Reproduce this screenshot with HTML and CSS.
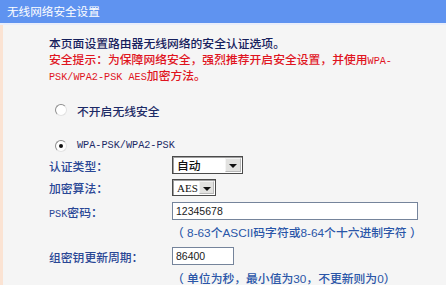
FILE: index.html
```html
<!DOCTYPE html>
<html lang="zh-CN">
<head>
    <meta charset="UTF-8">
    <title>无线网络安全设置</title>
    <link rel="stylesheet" href="styles.css">
</head>
<body>
    <div class="titlebar">无线网络安全设置</div>
    <div class="panel">
        <div class="intro">
            <p class="note">本页面设置路由器无线网络的安全认证选项。</p>
            <p class="warn">安全提示：为保障网络安全，强烈推荐开启安全设置，并使用<span class="mono">WPA-</span><br><span class="mono">PSK/WPA2-PSK AES</span>加密方法。</p>
        </div>

        <div class="option first">
            <span class="radio"></span>
            <span>不开启无线安全</span>
        </div>
        <div class="option second">
            <span class="radio checked"></span>
            <span class="mono">WPA-PSK/WPA2-PSK</span>
        </div>

        <div class="form">
            <div class="row row-auth">
                <span class="label">认证类型：</span>
                <div class="select wide"><span class="value">自动</span><span class="arrow"></span></div>
            </div>
            <div class="row row-cipher">
                <span class="label">加密算法：</span>
                <div class="select narrow"><span class="value serif-val">AES</span><span class="arrow"></span></div>
            </div>
            <div class="row row-psk">
                <span class="label"><span class="mono">PSK</span>密码：</span>
                <div class="field long">12345678</div>
            </div>
            <div class="hint hint-psk">（ 8-63个ASCII码字符或8-64个十六进制字符 ）</div>
            <div class="row row-period">
                <span class="label">组密钥更新周期：</span>
                <div class="field short">86400</div>
            </div>
            <div class="hint hint-period">（ 单位为秒，最小值为30，不更新则为0）</div>
        </div>
    </div>
</body>
</html>
```

FILE: styles.css
```css
body {
    margin: 0;
    background: #f5f5f5;
    font-family: "Noto Sans CJK SC", "Liberation Sans", sans-serif;
    font-size: 11.8px;
    font-weight: 500;
    overflow: hidden;
}

.titlebar {
    height: 23px;
    line-height: 23px;
    padding-left: 7px;
    background: #5f93f0;
    color: #ffffff;
    font-size: 11.6px;
    font-weight: 400;
    border-bottom: 2px solid #e9eefb;
}

.panel {
    border-left: 3px solid #fbe3d3;
    padding-left: 46px;
    height: 260px;
}

.mono {
    font-family: "Liberation Mono", monospace;
    font-size: 10.2px;
    line-height: 10px;
}

.intro {
    padding-top: 10px;
}

.intro p {
    margin: 0;
    line-height: 16px;
}

.note {
    color: #16205c;
}

.warn {
    color: #e0141e;
}

.option {
    display: flex;
    align-items: center;
    height: 16px;
    color: #1c2a66;
}

.option.first {
    margin-top: 19px;
}

.option.second {
    margin-top: 20px;
}

.radio {
    width: 10px;
    height: 10px;
    margin-left: 6px;
    margin-right: 10px;
    border-radius: 50%;
    border: 1px solid #8d8d8d;
    border-right-color: #e2e2e2;
    border-bottom-color: #e2e2e2;
    background: #ffffff;
    position: relative;
}

.radio.checked::after {
    content: "";
    position: absolute;
    left: 3px;
    top: 3px;
    width: 4px;
    height: 4px;
    border-radius: 50%;
    background: #111111;
}

.form {
    margin-top: 1px;
}

.row {
    display: grid;
    grid-template-columns: 123px auto;
    align-items: center;
    height: 20px;
    color: #2a4795;
}

.row > div {
    justify-self: start;
}

.row-cipher {
    margin-top: 2px;
}

.row-psk {
    margin-top: 4px;
}

.row-period {
    margin-top: 5px;
}

.select {
    display: flex;
    height: 16px;
    background: #ffffff;
    border: 1px solid #4a4a4a;
    box-shadow: inset 1px 1px 0 #a0a0a0;
    color: #111111;
}

.select.wide {
    width: 69px;
}

.select.narrow {
    width: 42px;
    height: 15px;
}

.select .value {
    flex: 1;
    padding-left: 4px;
    line-height: 16px;
}

.serif-val {
    font-family: "Liberation Serif", serif;
    font-size: 11px;
}

.select .arrow {
    width: 14px;
    margin: 1px;
    background: #e2e2e0;
    border: 1px solid #b8b8b8;
    border-left-color: #f4f4f4;
    border-top-color: #f4f4f4;
    position: relative;
}

.select .arrow::after {
    content: "";
    position: absolute;
    left: 3px;
    top: 5px;
    border-left: 4px solid transparent;
    border-right: 4px solid transparent;
    border-top: 4px solid #111111;
}

.field {
    height: 16px;
    line-height: 16px;
    padding-left: 3px;
    background: #ffffff;
    border: 1px solid #75849b;
    color: #1a1a1a;
    font-family: "Liberation Sans", sans-serif;
    font-size: 10.5px;
    font-weight: 400;
}

.field.long {
    width: 241px;
}

.field.short {
    width: 57px;
}

.hint {
    margin-left: 123px;
    height: 16px;
    line-height: 16px;
    color: #2a56a8;
    font-family: "Liberation Sans", "Noto Sans CJK SC", sans-serif;
}

.hint-psk {
    margin-top: 4px;
}

.hint-period {
    margin-top: 5px;
}
```
